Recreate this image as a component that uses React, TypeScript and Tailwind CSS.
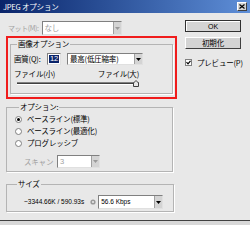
import React from 'react';

// JPEG オプション dialog (Photoshop style, Win2000 chrome)

const jp = "font-['Noto_Sans_CJK_JP','Liberation_Sans',sans-serif]";
const lat = "font-['Liberation_Sans','Noto_Sans_CJK_JP',sans-serif]";

function Arrow({ disabled = false }: { disabled?: boolean }) {
  return (
    <div className="w-[8px] h-full bg-[#d4d4d4] border-l border-[#a0a0a0] flex items-center justify-center">
      <svg width="5" height="3" viewBox="0 0 5 3">
        <path d="M0 0h5L2.5 3z" fill={disabled ? '#9a9a9a' : '#000'} />
      </svg>
    </div>
  );
}

function Select({ text, w, h = 'h-[13px]', disabled = false, font = jp }: { text: string; w: string; h?: string; disabled?: boolean; font?: string }) {
  return (
    <div className={`${w} ${h} flex bg-white border border-t-[#808080] border-l-[#808080] border-r-[#e0e0e0] border-b-[#e0e0e0]`}>
      <div className={`flex-1 flex items-center pl-[2px] leading-none ${font} ${disabled ? 'text-[#a0a0a0]' : 'text-black'}`}>{text}</div>
      <Arrow disabled={disabled} />
    </div>
  );
}

function Radio({ label, checked = false }: { label: string; checked?: boolean }) {
  return (
    <div className="h-[12px] flex items-center">
      <div className="ml-[5px] w-[7px] h-[7px] rounded-full bg-white border border-[#808080] flex items-center justify-center">
        {checked && <div className="w-[3px] h-[3px] rounded-full bg-black" />}
      </div>
      <span className="ml-[5px] leading-none">{label}</span>
    </div>
  );
}

function Group({ title, className, children }: { title: string; className: string; children: React.ReactNode }) {
  return (
    <fieldset className={`border border-[#b4b4b4] shadow-[1px_1px_0_#fff] px-[3px] ${className}`}>
      <legend className="px-[1px] leading-[10px] h-[10px]">{title}</legend>
      {children}
    </fieldset>
  );
}

export default function App() {
  return (
    <div className={`w-[250px] h-[225px] overflow-hidden whitespace-nowrap tracking-[-0.2px] bg-[#d8d8d8] text-[7.5px] text-black ${jp}`}>
      <div className="h-[221px] flex flex-col bg-[#e8e8e8] border-b border-[#404040]">
        {/* タイトルバー */}
        <div className="h-[13px] flex items-center bg-gradient-to-r from-[#0a246a] to-[#5f8fd8] pl-[3px] pr-[3px]">
          <span className="text-white leading-none">JPEG オプション</span>
          <div className="ml-auto w-[10px] h-[9px] bg-[#d4d4d4] border border-t-white border-l-white border-r-[#404040] border-b-[#404040] flex items-center justify-center">
            <svg width="6" height="5" viewBox="0 0 6 5">
              <path d="M0.5 0.5l5 4M5.5 0.5l-5 4" stroke="#000" strokeWidth="1.2" />
            </svg>
          </div>
        </div>

        <div className="flex flex-1">
          {/* 左カラム */}
          <div className="w-[178px] pl-[6px] flex flex-col">
            <div className="mt-[8px] w-[116px] h-[14px] flex items-center">
              <span className="pl-[2px] mr-[3px] text-[7px] text-[#a0a0a0] leading-none tracking-[-0.4px]">マット(M):</span>
              <Select text="なし" w="flex-1" h="h-[14px]" disabled />
            </div>

            <div className="mt-[1px] w-[171px] h-[63px] border-2 border-[#f01c1c] pl-[2px]">
              <Group title="画像オプション" className="mt-[1px] w-[163px] h-[55px] [&>legend]:ml-[3px]">
                <div className="mt-[4px] h-[12px] flex items-center">
                  <span className="w-[33px] shrink-0 leading-none">画質(Q):</span>
                  <div className="w-[14px] h-[12px] bg-white border border-t-[#808080] border-l-[#808080] border-r-[#e0e0e0] border-b-[#e0e0e0] flex items-center pl-[1px]">
                    <span className={`bg-[#0a246a] text-white leading-none px-[1px] ${lat}`}>12</span>
                  </div>
                  <div className="ml-[6px]">
                    <Select text="最高(低圧縮率)" w="w-[76px]" h="h-[12px]" />
                  </div>
                </div>
                <div className="mt-[5px] w-[125px] flex justify-between leading-none">
                  <span>ファイル(小)</span>
                  <span>ファイル(大)</span>
                </div>
                <div className="mt-[3px] ml-[3px] w-[122px] h-[5px] relative">
                  <div className="absolute left-0 right-0 top-[1px] h-[3px] bg-[#404040] border-t border-[#808080] border-b border-b-white" />
                  <svg className="absolute right-0 top-[-1px]" width="6" height="7" viewBox="0 0 6 7">
                    <path d="M0.5 6.5V3L3 0.5 5.5 3v3.5z" fill="#e8e8e8" stroke="#404040" />
                  </svg>
                </div>
              </Group>
            </div>

            <Group title="オプション:" className="mt-[3px] w-[167px] h-[70px] [&>legend]:ml-[9px]">
              <div className="mt-[1px]">
                <Radio label="ベースライン(標準)" checked />
                <Radio label="ベースライン(最適化)" />
                <Radio label="プログレッシブ" />
              </div>
              <div className="mt-[6px] h-[13px] flex items-center">
                <span className="ml-[14px] w-[33px] shrink-0 text-[#a0a0a0] leading-none">スキャン</span>
                <Select text="3" w="w-[43px]" disabled font={lat} />
              </div>
            </Group>

            <Group title="サイズ" className="mt-[7px] w-[168px] h-[33px] [&>legend]:ml-[7px]">
              <div className="mt-[6px] h-[14px] flex items-center">
                <span className={`ml-[14px] text-[6.5px] leading-none tracking-normal ${lat}`}>~3344.66K / 590.93s</span>
                <svg className="ml-[6px]" width="6" height="6" viewBox="0 0 6 6">
                  <circle cx="3" cy="3" r="2.6" fill="#9a9a9a" />
                  <circle cx="3" cy="3" r="1.1" fill="#e8e8e8" />
                </svg>
                <div className="ml-[2px]">
                  <Select text="56.6 Kbps" w="w-[65px]" h="h-[14px]" font={`${lat} text-[6.5px] tracking-normal`} />
                </div>
              </div>
            </Group>
          </div>

          {/* 右カラム */}
          <div className="pl-[7px] pt-[7px] flex flex-col">
            <div className={`w-[56px] h-[12px] bg-[#d4d4d4] border border-[#303030] shadow-[inset_1px_1px_0_#fff] flex items-center justify-center leading-none tracking-normal ${lat} text-[7px]`}>
              OK
            </div>
            <div className="mt-[5px] w-[56px] h-[12px] bg-[#d4d4d4] border border-t-white border-l-white border-r-[#404040] border-b-[#404040] flex items-center justify-center leading-none">
              初期化
            </div>
            <div className="mt-[10px] flex items-center">
              <div className="w-[7px] h-[7px] bg-white border border-[#808080] flex items-center justify-center">
                <svg width="5" height="5" viewBox="0 0 5 5">
                  <path d="M0.5 2.2l1.5 1.6L4.5 0.8" stroke="#000" strokeWidth="1.2" fill="none" />
                </svg>
              </div>
              <span className="ml-[5px] leading-none">プレビュー(P)</span>
            </div>
          </div>
        </div>
      </div>
    </div>
  );
}
